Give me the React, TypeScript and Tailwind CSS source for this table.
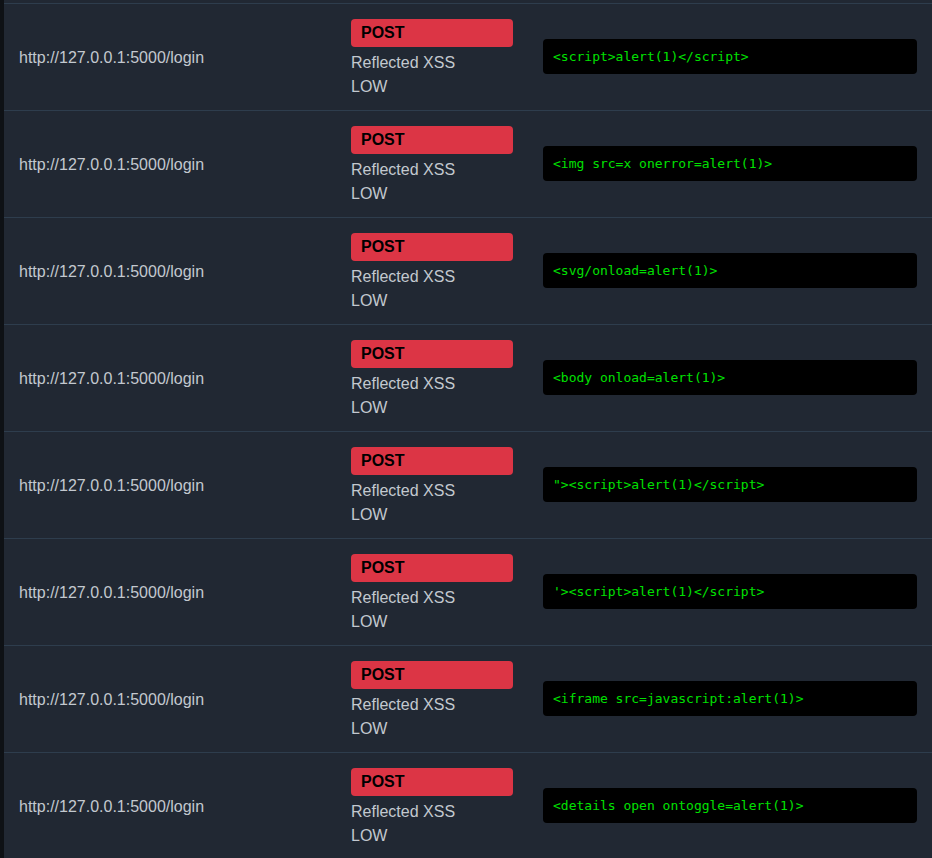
const payloads = [
  '<script>alert(1)</script>',
  '<img src=x onerror=alert(1)>',
  '<svg/onload=alert(1)>',
  '<body onload=alert(1)>',
  '"><script>alert(1)</script>',
  "'><script>alert(1)</script>",
  '<iframe src=javascript:alert(1)>',
  '<details open ontoggle=alert(1)>',
]

export default function App() {
  return (
    <div className="flex h-[858px] overflow-hidden bg-[#212833] font-['Liberation_Sans',Arial,sans-serif] text-base">
      <div className="w-[4px] shrink-0 bg-[#0e1115]" />
      <div className="flex-1 pt-[3px]">
        <table className="w-full border-collapse">
          <tbody>
            {payloads.map((p, i) => (
              <tr key={i} className="border-t border-[#2e3d4d]">
                <td className="w-[332px] px-[15px] pt-[2px] align-middle leading-6 text-[#c3c8cf]">
                  http://127.0.0.1:5000/login
                </td>
                <td className="w-[192px] px-[15px] pt-[15px] pb-[11px] align-middle leading-6 text-[#c3c8cf]">
                  <div className="mb-[4px] h-[28px] rounded bg-[#dc3545] pl-[10px] font-bold leading-[28px] text-black">
                    POST
                  </div>
                  <div>Reflected XSS</div>
                  <div>LOW</div>
                </td>
                <td className="px-[15px] align-middle">
                  <div className="mb-[2px] h-[35px] rounded bg-black pl-[10px] font-['DejaVu_Sans_Mono',monospace] text-[13px] leading-[35px] whitespace-pre text-[#00e000]">
                    {p}
                  </div>
                </td>
              </tr>
            ))}
          </tbody>
        </table>
      </div>
    </div>
  )
}
